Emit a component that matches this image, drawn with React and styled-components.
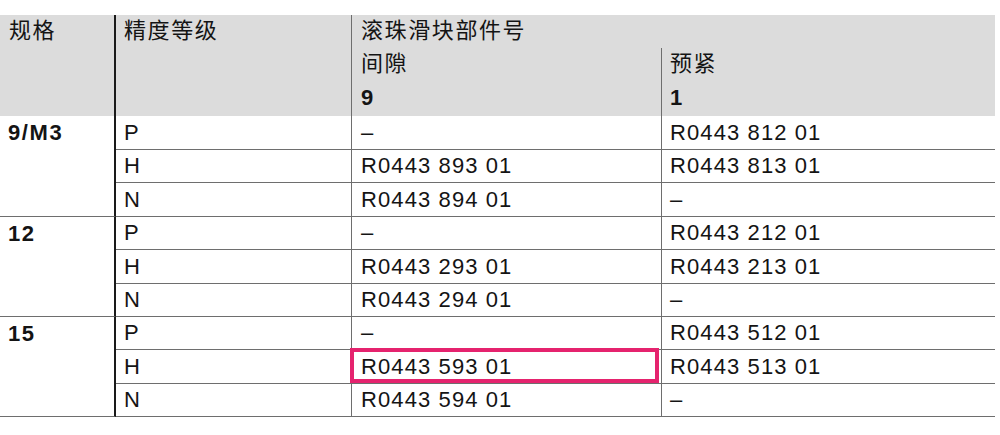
import React from "react";
import styled, { createGlobalStyle } from "styled-components";

const Global = createGlobalStyle`
  html, body { margin: 0; padding: 0; background: #fff; }
  body { font-family: "Liberation Sans", Arial, "Noto Sans CJK SC", sans-serif; color: #141414; }
`;

const Page = styled.div`
  width: 1000px;
  height: 435px;
  padding-top: 15px;
  box-sizing: border-box;
  overflow: hidden;
`;

const Table = styled.table`
  width: 995px;
  border-collapse: separate;
  border-spacing: 0;
  table-layout: fixed;
  font-size: 22px;
  letter-spacing: 1.1px;
`;

const HeadCell = styled.th`
  background: #dcdcdc;
  font-weight: ${(p) => (p.$bold ? 700 : 400)};
  font-family: "Liberation Sans", Arial, "Noto Sans CJK SC", sans-serif;
  font-size: 22px;
  letter-spacing: ${(p) => (p.$bold ? "1px" : "1.6px")};
  text-align: left;
  vertical-align: top;
  height: ${(p) => p.$h || "auto"};
  padding: ${(p) => p.$pad || "2px 0 0 8px"};
  line-height: 28px;
  border-right: ${(p) =>
    p.$edge === "thick" ? "2px solid #1a1a1a" : p.$edge === "thin" ? "1px solid #6e6e6e" : "none"};
  white-space: nowrap;
  box-sizing: border-box;
`;

const GroupCell = styled.td`
  font-weight: 700;
  vertical-align: top;
  padding: 4px 0 0 8px;
  line-height: 26px;
  letter-spacing: 1.6px;
  border-right: 2px solid #1a1a1a;
  border-bottom: 1px solid #6e6e6e;
`;

const Cell = styled.td`
  position: relative;
  height: ${(p) => p.$h || "33px"};
  padding: 0 0 0 ${(p) => p.$pl || "8px"};
  line-height: 26px;
  vertical-align: middle;
  border-bottom: 1px solid #6e6e6e;
  border-right: ${(p) => (p.$line ? "1px solid #6e6e6e" : "none")};
  white-space: nowrap;
  box-sizing: border-box;
`;

const Highlight = styled.span`
  position: absolute;
  top: -2px;
  left: -2px;
  right: 2px;
  bottom: 0;
  border: 4px solid #e5236e;
  pointer-events: none;
`;

const groups = [
  {
    size: "9/M3",
    heights: ["34px", "33px", "34px"],
    rows: [
      ["P", "–", "R0443 812 01"],
      ["H", "R0443 893 01", "R0443 813 01"],
      ["N", "R0443 894 01", "–"],
    ],
  },
  {
    size: "12",
    heights: ["33px", "34px", "33px"],
    rows: [
      ["P", "–", "R0443 212 01"],
      ["H", "R0443 293 01", "R0443 213 01"],
      ["N", "R0443 294 01", "–"],
    ],
  },
  {
    size: "15",
    heights: ["33px", "34px", "33px"],
    rows: [
      ["P", "–", "R0443 512 01"],
      ["H", "R0443 593 01", "R0443 513 01", true],
      ["N", "R0443 594 01", "–"],
    ],
  },
];

export default function App() {
  return (
    <Page>
      <Global />
      <Table>
        <colgroup>
          <col style={{ width: 116 }} />
          <col style={{ width: 236 }} />
          <col style={{ width: 310 }} />
          <col style={{ width: 333 }} />
        </colgroup>
        <thead>
          <tr>
            <HeadCell rowSpan={3} $edge="thick" $pad="2px 0 0 9px">规格</HeadCell>
            <HeadCell rowSpan={3} $edge="thin" $pad="2px 0 0 8px">精度等级</HeadCell>
            <HeadCell colSpan={2} $h="33px" $pad="2px 0 0 9px">滚珠滑块部件号</HeadCell>
          </tr>
          <tr>
            <HeadCell $edge="thin" $h="33px" $pad="2px 0 0 9px">间隙</HeadCell>
            <HeadCell $h="33px" $pad="2px 0 0 8px">预紧</HeadCell>
          </tr>
          <tr>
            <HeadCell $edge="thin" $bold $h="35px" $pad="3px 0 0 9px">9</HeadCell>
            <HeadCell $bold $h="35px" $pad="3px 0 0 8px">1</HeadCell>
          </tr>
        </thead>
        <tbody>
          {groups.map((g) =>
            g.rows.map((r, i) => (
              <tr key={g.size + r[0]}>
                {i === 0 && <GroupCell rowSpan={3}>{g.size}</GroupCell>}
                <Cell $line $h={g.heights[i]} $pl="8px">{r[0]}</Cell>
                <Cell $line $h={g.heights[i]} $pl="9px">
                  {r[1]}
                  {r[3] && <Highlight />}
                </Cell>
                <Cell $h={g.heights[i]} $pl="8px">{r[2]}</Cell>
              </tr>
            ))
          )}
        </tbody>
      </Table>
    </Page>
  );
}
